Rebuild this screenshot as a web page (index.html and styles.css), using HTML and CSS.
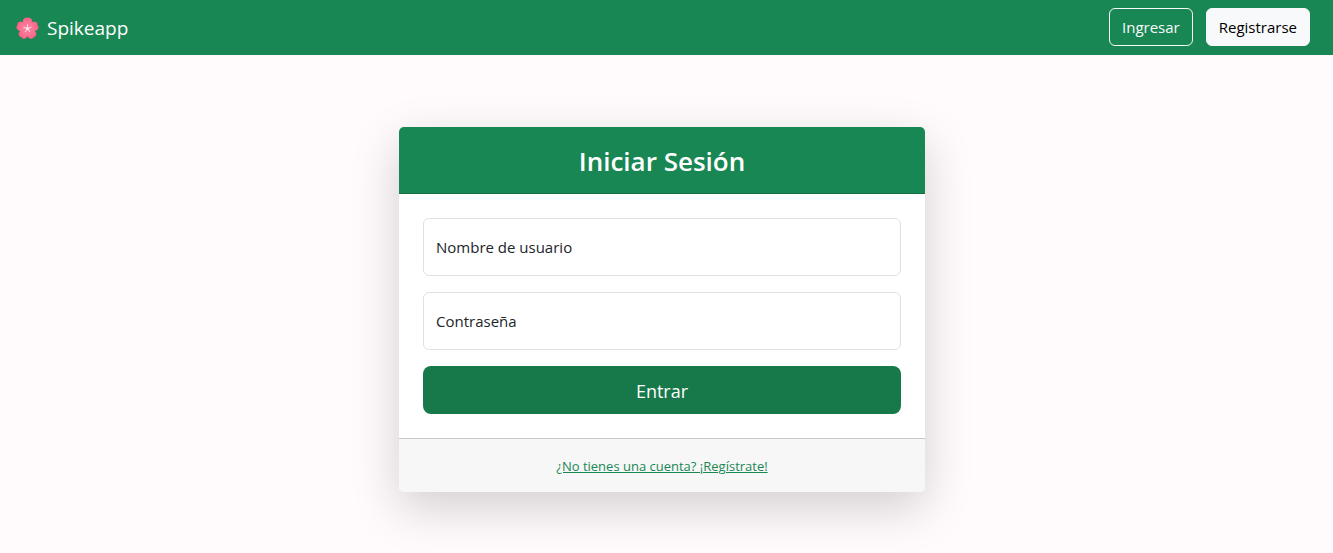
FILE: index.html
```html
<!DOCTYPE html>
<html lang="es">
<head>
<meta charset="utf-8">
<meta name="viewport" content="width=device-width, initial-scale=1">
<title>Spikeapp</title>
<link rel="stylesheet" href="styles.css">
</head>
<body>
<header class="navbar">
  <a class="brand" href="#">
    <svg class="brand-icon" viewBox="0 0 40 40" aria-hidden="true">
      <defs>
        <linearGradient id="petal" x1="0" y1="0" x2="0" y2="1">
          <stop offset="0" stop-color="#fb6189"/>
          <stop offset="1" stop-color="#ff8ba6"/>
        </linearGradient>
        <path id="leaf" d="M20 22C15 18 11 12 12 6C13 2 17 0 20 2C23 0 27 2 28 6C29 12 25 18 20 22Z"/>
      </defs>
      <g fill="url(#petal)" stroke="#f65f86" stroke-width=".5">
        <use href="#leaf"/>
        <use href="#leaf" transform="rotate(72 20 21)"/>
        <use href="#leaf" transform="rotate(144 20 21)"/>
        <use href="#leaf" transform="rotate(216 20 21)"/>
        <use href="#leaf" transform="rotate(288 20 21)"/>
      </g>
      <g stroke="#ffdbe7" stroke-width="1.8" stroke-linecap="round">
        <path d="M20 21V14M20 21L26.700 18.800M20 21L24.100 26.700M20 21L15.900 26.700M20 21L13.300 18.800"/>
      </g>
      <circle cx="20" cy="21" r="3" fill="#ffe6ee"/>
    </svg>
    <span>Spikeapp</span>
  </a>
  <nav class="nav-actions">
    <a class="btn btn-outline" href="#">Ingresar</a>
    <a class="btn btn-light" href="#">Registrarse</a>
  </nav>
</header>
<main class="page">
  <section class="card">
    <h1 class="card-header">Iniciar Sesión</h1>
    <form class="card-body">
      <div class="field">
        <input class="field-input" type="text" id="username" name="username" autocomplete="username">
        <label class="field-label" for="username">Nombre de usuario</label>
      </div>
      <div class="field">
        <input class="field-input" type="password" id="password" name="password" autocomplete="current-password">
        <label class="field-label" for="password">Contraseña</label>
      </div>
      <button class="submit" type="submit">Entrar</button>
    </form>
    <footer class="card-footer"><a class="link" href="#">¿No tienes una cuenta? ¡Regístrate!</a></footer>
  </section>
</main>
</body>
</html>
```
FILE: styles.css
```css
*, *::before, *::after {
  box-sizing: border-box;
}

body {
  margin: 0;
  background: #fffbfc;
  color: #212529;
  font-family: "Segoe UI", "Open Sans", "Noto Sans", sans-serif;
  font-size: 15px;
  line-height: 24px;
}

.navbar {
  display: flex;
  align-items: center;
  justify-content: space-between;
  min-height: 55px;
  padding: 8px 23px 9px 16px;
  background: #198754;
}

.brand {
  display: flex;
  align-items: center;
  gap: 8px;
  padding-top: 2px;
  color: #fff;
  font-size: 19px;
  line-height: 30px;
  text-decoration: none;
}

.brand-icon {
  width: 23px;
  height: 22px;
}

.nav-actions {
  display: flex;
  gap: 13px;
}

.btn {
  padding: 6px 12px;
  border: 1px solid #f8f9fa;
  border-radius: 6px;
  text-decoration: none;
}

.btn-outline {
  color: #f8f9fa;
}

.btn-light {
  background: #f8f9fa;
  color: #000;
}

.page {
  display: flex;
  justify-content: center;
  padding: 72px 21px 61px 12px;
}

.card {
  width: 100%;
  max-width: 526px;
  border-radius: 5px;
  background: #fff;
  box-shadow: 0 16px 48px rgba(0, 0, 0, .175);
}

.card-header {
  margin: 0;
  padding: 17px 16px 15px;
  border-bottom: 1px solid #14713f;
  border-radius: 5px 5px 0 0;
  background: #198754;
  color: #fff;
  font-size: 26px;
  font-weight: 600;
  line-height: 34px;
  text-align: center;
}

.card-body {
  display: flex;
  flex-direction: column;
  gap: 16px;
  padding: 24px;
}

.field {
  position: relative;
}

.field-input {
  display: block;
  width: 100%;
  height: 58px;
  padding: 26px 12px 10px;
  border: 1px solid #dee2e6;
  border-radius: 6px;
  background: #fff;
  color: inherit;
  font: inherit;
}

.field-label {
  position: absolute;
  top: 0;
  left: 0;
  padding: 17px 13px;
  pointer-events: none;
}

.field-input:focus + .field-label {
  padding-top: 4px;
  font-size: 13px;
}

.submit {
  padding: 10px 16px 8px;
  border: 0;
  border-radius: 8px;
  background: #17784a;
  color: #fff;
  font: inherit;
  font-size: 18px;
  line-height: 30px;
}

.card-footer {
  padding: 17px 16px 15px;
  border-top: 1px solid #c9c9c9;
  border-radius: 0 0 5px 5px;
  background: #f7f7f7;
  font-size: 13px;
  line-height: 21px;
  text-align: center;
}

.link {
  color: #198754;
}
```
